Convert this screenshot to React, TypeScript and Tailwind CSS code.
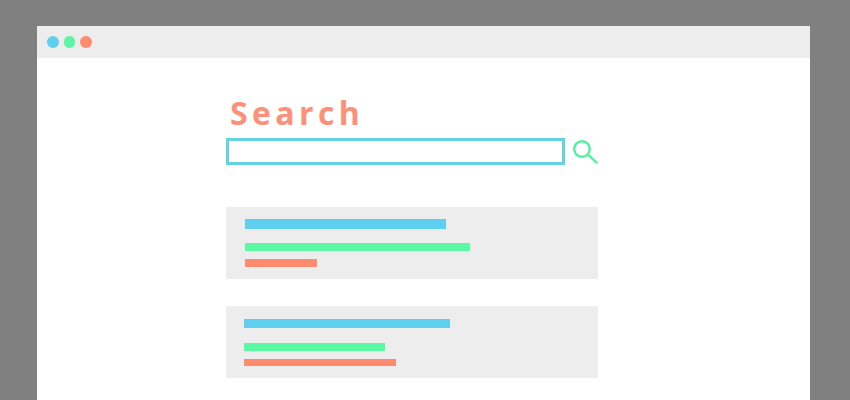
const cards = [
  {
    pad: "pl-[19px] pt-3",
    blue: "w-[201px] h-2.5 mb-[14px]",
    green: "w-[225px] h-2 mb-2",
    red: "w-[72px] h-2",
  },
  {
    pad: "pl-[18px] pt-[13px]",
    blue: "w-[206px] h-[9px] mb-[15px]",
    green: "w-[141px] h-2 mb-2",
    red: "w-[152px] h-[7px]",
  },
];

function SearchIcon() {
  return (
    <svg width="26" height="26" viewBox="0 0 26 26" fill="none" stroke="#55f0a0" strokeWidth="2.5" strokeLinecap="round">
      <circle cx="10" cy="10" r="7.8" />
      <path d="M15.8 15.4 L24.6 23.6" />
    </svg>
  );
}

export default function App() {
  return (
    <div className="h-[400px] w-[850px] overflow-hidden bg-[#808080] pl-[37px] pr-10 pt-[26px]">
      <div className="h-[374px] w-[773px] bg-white">
        <div className="flex h-8 items-center gap-[5px] bg-[#ededed] pl-[10px]">
          <span className="size-[11.5px] rounded-full bg-[#5ecfee]" />
          <span className="size-[11.5px] rounded-full bg-[#5bf5a4]" />
          <span className="size-[11.5px] rounded-full bg-[#fe8a70]" />
        </div>
        <div className="ml-[189px] w-[372px] pt-[35px]">
          <h1 className="pl-[4px] font-['Open_Sans',sans-serif] text-[32px] leading-[40px] font-bold tracking-[4.4px] text-[#fe8f78]">
            Search
          </h1>
          <div className="mt-[5px] flex items-start">
            <div className="h-[27px] w-[340px] border-[3px] border-[#62d3e3] bg-white" />
            <div className="ml-[7px] mt-px">
              <SearchIcon />
            </div>
          </div>
          <div className="mt-[42px] flex flex-col gap-[27px]">
            {cards.map((c, i) => (
              <div key={i} className={`h-[72px] bg-[#ededed] ${c.pad}`}>
                <div className={`${c.blue} bg-[#5ecfee]`} />
                <div className={`${c.green} bg-[#5bf9a4]`} />
                <div className={`${c.red} bg-[#fe8a70]`} />
              </div>
            ))}
          </div>
        </div>
      </div>
    </div>
  );
}
